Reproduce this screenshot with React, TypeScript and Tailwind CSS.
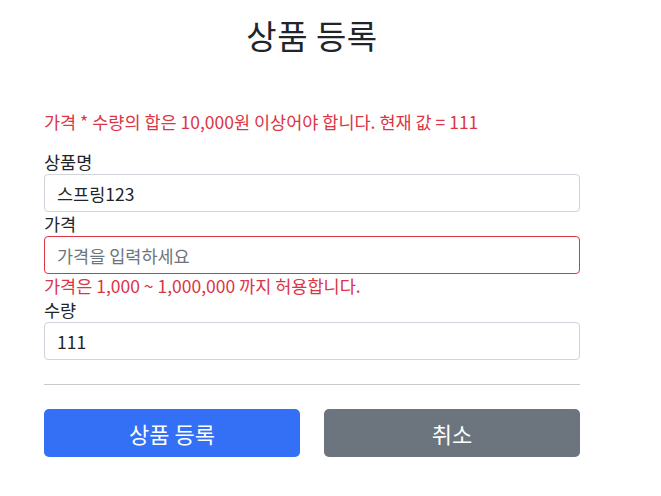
const font = { fontFamily: '"Noto Sans CJK KR", "Noto Sans", sans-serif' };

export default function App() {
  return (
    <div className="min-h-screen bg-white text-[#212529]" style={font}>
      <div className="ml-[32px] w-[560px] px-3">
        <div className="pt-4 pb-12 text-center">
          <h2 className="mb-2 h-[38px] text-[33px] font-normal leading-[38px] tracking-[0.5px]">상품 등록</h2>
        </div>
        <form className="text-[17.5px] leading-6">
          <p className="mb-4 text-[#dc3545]">
            가격 * 수량의 합은 10,000원 이상어야 합니다. 현재 값 = 111
          </p>
          <div>
            <label className="block">상품명</label>
            <input
              defaultValue="스프링123"
              className="block h-[38px] w-full rounded border border-[#ced4da] px-3 outline-none"
            />
          </div>
          <div>
            <label className="block">가격</label>
            <input
              placeholder="가격을 입력하세요"
              className="block h-[38px] w-full rounded border border-[#dc3545] px-3 outline-none placeholder:text-[#6c757d]"
            />
            <div className="text-[#dc3545]">가격은 1,000 ~ 1,000,000 까지 허용합니다.</div>
          </div>
          <div>
            <label className="block">수량</label>
            <input
              defaultValue="111"
              className="block h-[38px] w-full rounded border border-[#ced4da] px-3 outline-none"
            />
          </div>
          <hr className="my-6 border-t border-[#c8c9ca]" />
          <div className="grid grid-cols-2 gap-6">
            <button
              type="button"
              className="h-12 w-full rounded-[5px] bg-[#3370f5] text-[22px] text-white"
            >
              상품 등록
            </button>
            <button
              type="button"
              className="h-12 w-full rounded-[5px] bg-[#6c757d] text-[22px] text-white"
            >
              취소
            </button>
          </div>
        </form>
      </div>
    </div>
  );
}
